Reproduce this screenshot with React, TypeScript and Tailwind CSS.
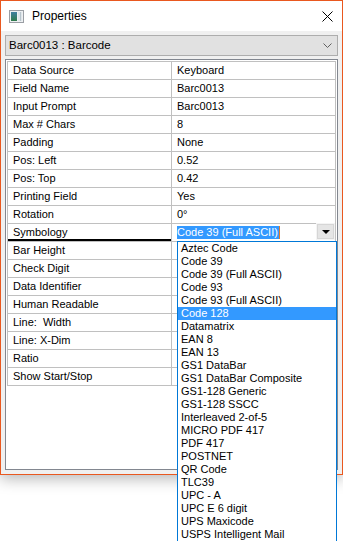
import React from "react";

const rows: [string, string][] = [
  ["Data Source", "Keyboard"],
  ["Field Name", "Barc0013"],
  ["Input Prompt", "Barc0013"],
  ["Max # Chars", "8"],
  ["Padding", "None"],
  ["Pos: Left", "0.52"],
  ["Pos: Top", "0.42"],
  ["Printing Field", "Yes"],
  ["Rotation", "0°"],
  ["Symbology", ""],
  ["Bar Height", ""],
  ["Check Digit", ""],
  ["Data Identifier", ""],
  ["Human Readable", ""],
  ["Line:  Width", ""],
  ["Line: X-Dim", ""],
  ["Ratio", ""],
  ["Show Start/Stop", ""],
];

const options = [
  "Aztec Code",
  "Code 39",
  "Code 39 (Full ASCII)",
  "Code 93",
  "Code 93 (Full ASCII)",
  "Code 128",
  "Datamatrix",
  "EAN 8",
  "EAN 13",
  "GS1 DataBar",
  "GS1 DataBar Composite",
  "GS1-128 Generic",
  "GS1-128 SSCC",
  "Interleaved 2-of-5",
  "MICRO PDF 417",
  "PDF 417",
  "POSTNET",
  "QR Code",
  "TLC39",
  "UPC - A",
  "UPC E 6 digit",
  "UPS Maxicode",
  "USPS Intelligent Mail",
];

function TitleIcon() {
  return (
    <svg width="15" height="13" viewBox="0 0 15 13">
      <defs>
        <linearGradient id="g1" x1="0" y1="0" x2="0" y2="1">
          <stop offset="0" stopColor="#3f7fa0" />
          <stop offset="1" stopColor="#2f7a4a" />
        </linearGradient>
      </defs>
      <rect x="0.5" y="0.5" width="14" height="12" fill="#eef0f2" stroke="#9a9ea4" />
      <rect x="2" y="2" width="6" height="9" fill="url(#g1)" />
      <rect x="9" y="2" width="4" height="9" fill="#dfe6ea" />
      <line x1="11.5" y1="2" x2="11.5" y2="11" stroke="#b8c4cc" />
    </svg>
  );
}

export default function App() {
  return (
    <div
      className="relative w-[343px] h-[541px] overflow-hidden bg-white text-black"
      style={{ fontFamily: '"Liberation Sans", Arial, sans-serif' }}
    >
      <div className="flex flex-col w-[343px] h-[475px] border border-[#e9581f] bg-white shadow-[0_4px_14px_rgba(0,0,0,0.28)]">
        {/* title bar */}
        <div className="flex items-center h-[30px] bg-white shrink-0">
          <div className="ml-[8px] mt-[1px] flex">
            <TitleIcon />
          </div>
          <span className="ml-[8px] text-[12px] leading-none">Properties</span>
          <svg className="ml-auto mr-[9px]" width="11" height="11" viewBox="0 0 11 11">
            <path d="M0.5 0.5 L10.5 10.5 M10.5 0.5 L0.5 10.5" stroke="#000" strokeWidth="1" />
          </svg>
        </div>
        {/* body */}
        <div className="flex flex-col flex-1 bg-[#f0f0f0] px-[4px] pt-[4px] pb-[4px] gap-[3px]">
          <div className="flex items-center h-[21px] border border-[#adadad] bg-[#e1e1e1] shrink-0">
            <span className="ml-[3px] text-[11.5px] leading-none">Barc0013 : Barcode</span>
            <svg className="ml-auto mr-[5px]" width="9" height="6" viewBox="0 0 9 6">
              <path d="M0.5 0.5 L4.5 4.5 L8.5 0.5" fill="none" stroke="#606060" strokeWidth="1" />
            </svg>
          </div>
          <div className="flex-1 border border-[#828790] bg-white p-[1px]">
            <div className="grid grid-cols-[164px_164px] border-t border-l border-[#c0c0c0] text-[11px]">
              {rows.map(([k, v], i) => {
                const isSym = k === "Symbology";
                return (
                  <React.Fragment key={i}>
                    <div
                      className={
                        "flex items-center h-[18px] pl-[5px] border-r border-b border-[#c0c0c0] whitespace-pre " +
                        (isSym ? "shadow-[inset_0_-2px_0_#000]" : "")
                      }
                    >
                      {k}
                    </div>
                    {isSym ? (
                      <div className="flex items-start h-[18px] border-r border-b border-[#c0c0c0] bg-white">
                        <div className="flex items-center h-[17px] pl-[5px]">
                          <span className="bg-[#3399ff] text-white h-[13px] leading-[13px] pr-[1px]">
                            Code 39 (Full ASCII)
                          </span>
                          <span className="w-[1px] h-[13px] bg-[#e07a2a]" />
                        </div>
                        <div className="ml-auto -mt-[1px] flex items-center justify-center w-[19px] h-[17px] bg-[#e5e5e5] border border-[#f4f4f4] shadow-[inset_0_0_0_1px_#d6d6d6]">
                          <svg width="8" height="4" viewBox="0 0 8 4">
                            <path d="M0 0 L8 0 L4 4 Z" fill="#000" />
                          </svg>
                        </div>
                      </div>
                    ) : (
                      <div className="flex items-center h-[18px] pl-[5px] border-r border-b border-[#c0c0c0]">
                        {v}
                      </div>
                    )}
                  </React.Fragment>
                );
              })}
            </div>
          </div>
        </div>
      </div>
      {/* dropdown list popup */}
      <div className="absolute left-[177px] top-[241px] w-[160px] h-[310px] border border-[#0078d7] bg-white text-[11px]">
        {options.map((o) => (
          <div
            key={o}
            className={
              "h-[13px] leading-[13px] pl-[3px] whitespace-nowrap " +
              (o === "Code 128" ? "bg-[#3399ff] text-white" : "")
            }
          >
            {o}
          </div>
        ))}
      </div>
    </div>
  );
}
